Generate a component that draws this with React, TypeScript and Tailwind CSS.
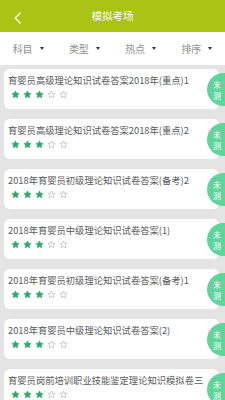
const FILTERS = ["科目", "类型", "热点", "排序"];

const PAPERS = [
  "育婴员高级理论知识试卷答案2018年(重点)1",
  "育婴员高级理论知识试卷答案2018年(重点)2",
  "2018年育婴员初级理论知识试卷答案(备考)2",
  "2018年育婴员中级理论知识试卷答案(1)",
  "2018年育婴员初级理论知识试卷答案(备考)1",
  "2018年育婴员中级理论知识试卷答案(2)",
  "育婴员岗前培训职业技能鉴定理论知识模拟卷三",
];

function Star({ filled }: { filled: boolean }) {
  return (
    <svg width="9" height="9" viewBox="0 0 24 24" aria-hidden="true">
      <path
        d="M12 2.5l2.9 6.1 6.6.8-4.9 4.6 1.3 6.6L12 17.3l-5.9 3.3 1.3-6.6-4.9-4.6 6.6-.8z"
        fill={filled ? "#2ea96b" : "none"}
        stroke={filled ? "#2ea96b" : "#b5b5b5"}
        strokeWidth="1.8"
        strokeLinejoin="round"
      />
    </svg>
  );
}

export default function App() {
  return (
    <div
      className="h-[400px] w-[225px] overflow-hidden bg-[#e4e4e4]"
      style={{ fontFamily: '"Noto Sans CJK SC", "Noto Sans", sans-serif' }}
    >
      <header className="relative flex h-[32px] items-center justify-center bg-[#a9c415]">
        <svg
          className="absolute left-[14px] top-[12px]"
          width="8"
          height="12"
          viewBox="0 0 8 12"
          fill="none"
          stroke="white"
          strokeWidth="1.2"
        >
          <path d="M6.5 0.5 1.2 6l5.3 5.5" />
        </svg>
        <span className="text-[10.5px] text-white">模拟考场</span>
      </header>

      <div className="grid h-[33px] grid-cols-4 items-center bg-white">
        {FILTERS.map((f) => (
          <div key={f} className="flex items-center justify-center gap-[7px] text-[10px] text-[#909090]">
            <span>{f}</span>
            <span className="h-0 w-0 border-x-[2.5px] border-t-[3px] border-x-transparent border-t-[#333]" />
          </div>
        ))}
      </div>

      <div className="flex flex-col gap-[10px] pl-[4px] pr-[6px] pt-[4px]">
        {PAPERS.map((p) => (
          <div key={p} className="relative h-[40px] rounded-[6px] bg-white pl-[4px] pt-[5px]">
            <div className="whitespace-nowrap text-[9.3px] leading-[12px] text-[#585858]">{p}</div>
            <div className="mt-[4px] flex gap-[3px] pl-[3px]">
              <Star filled />
              <Star filled />
              <Star filled />
              <Star filled={false} />
              <Star filled={false} />
            </div>
            <div className="absolute right-[-6px] top-[4px] flex h-[33px] w-[18px] flex-col items-center justify-center rounded-l-full bg-[#5dd59b] pl-[2px] text-[8px] leading-[11px] text-white">
              <span>未</span>
              <span>测</span>
            </div>
          </div>
        ))}
      </div>
    </div>
  );
}
